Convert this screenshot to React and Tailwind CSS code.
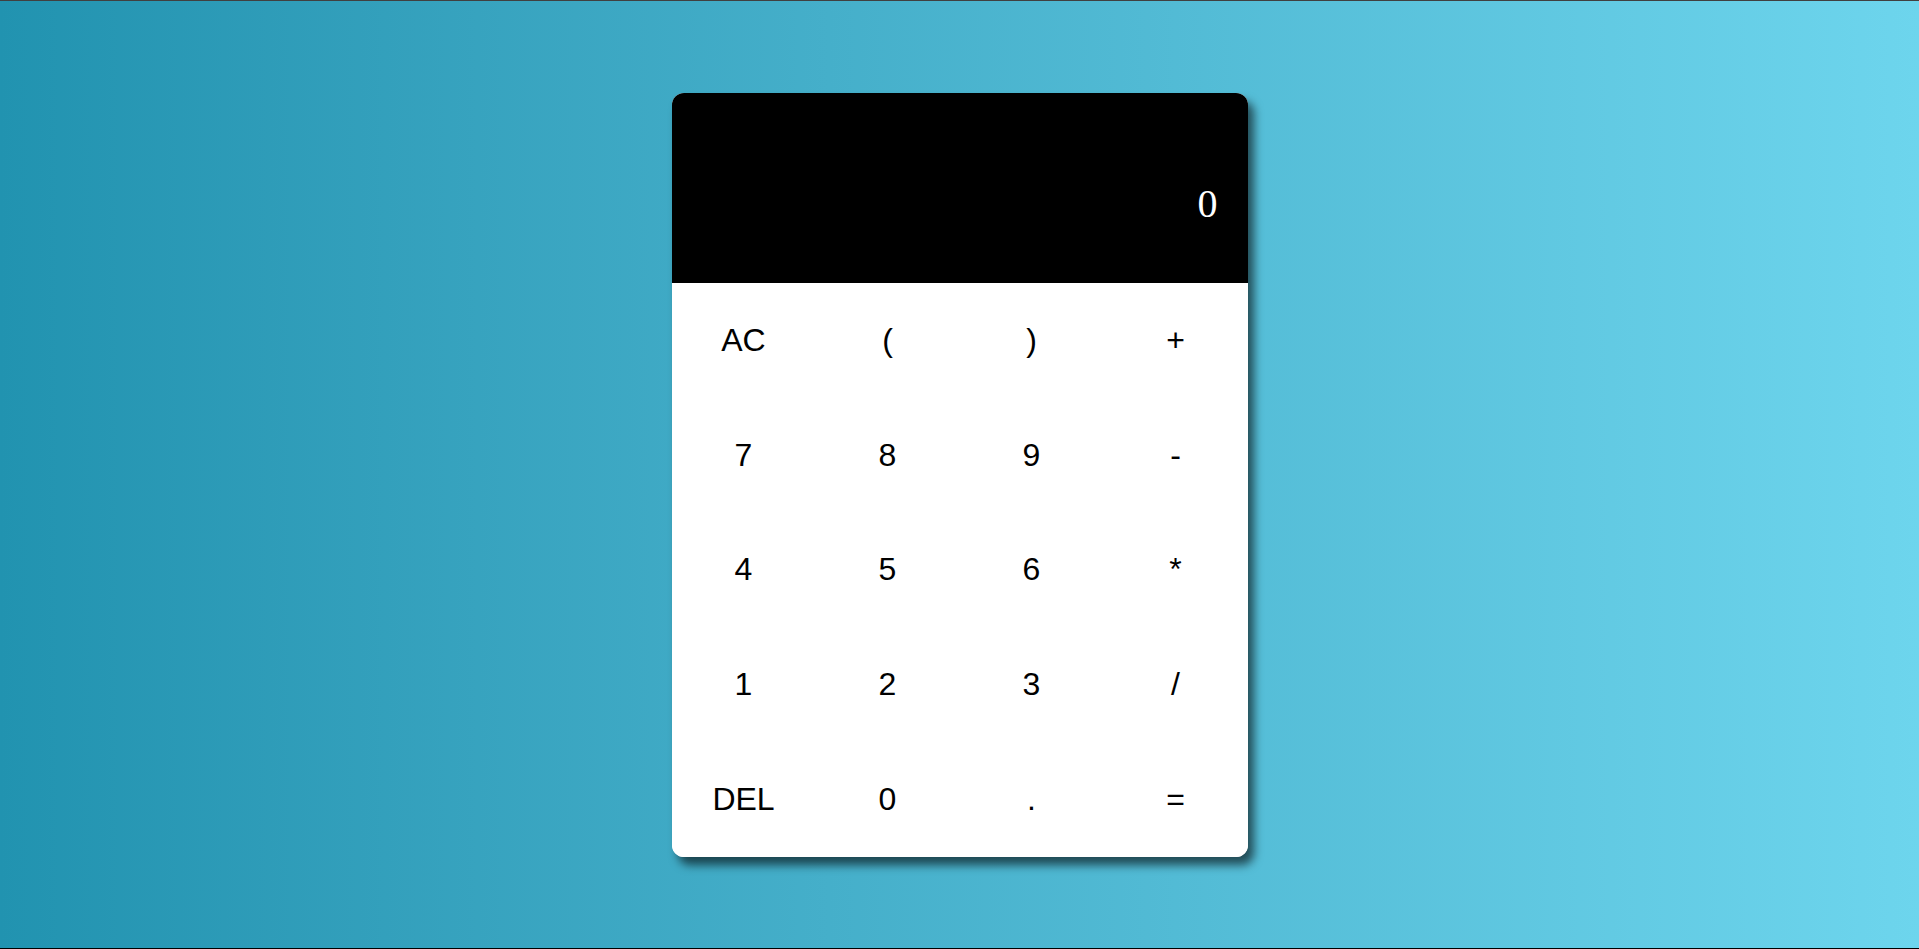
import { useState } from "react";

const KEYS = [
  "AC", "(", ")", "+",
  "7", "8", "9", "-",
  "4", "5", "6", "*",
  "1", "2", "3", "/",
  "DEL", "0", ".", "=",
];

export default function App() {
  const [value, setValue] = useState("0");

  const press = (k) => {
    if (k === "AC") return setValue("0");
    if (k === "DEL") return setValue((v) => (v.length > 1 ? v.slice(0, -1) : "0"));
    if (k === "=") {
      try {
        // eslint-disable-next-line no-new-func
        const r = Function(`return (${value})`)();
        setValue(String(r));
      } catch {
        setValue("Error");
      }
      return;
    }
    setValue((v) => (v === "0" || v === "Error" ? k : v + k));
  };

  return (
    <div className="h-screen w-full flex items-center justify-center border-t border-t-[#404040] border-b border-b-black bg-gradient-to-r from-[#2193b0] to-[#6dd5ed]">
      <div className="w-[576px] h-[764px] flex flex-col bg-white rounded-[12px] overflow-hidden shadow-[6px_8px_10px_rgba(0,0,0,0.6)]">
        <div className="h-[190px] shrink-0 bg-black flex items-end justify-end pr-[30px] pb-[56px]">
          <span className="text-white text-[40px] leading-[46px] font-['Liberation_Serif',serif] truncate">
            {value}
          </span>
        </div>
        <div className="flex-1 grid grid-cols-4 grid-rows-5">
          {KEYS.map((k) => (
            <button
              key={k}
              onClick={() => press(k)}
              className="flex items-center justify-center bg-white text-black text-[32px] font-['Liberation_Sans',Arial,sans-serif] cursor-pointer"
            >
              {k}
            </button>
          ))}
        </div>
      </div>
    </div>
  );
}
